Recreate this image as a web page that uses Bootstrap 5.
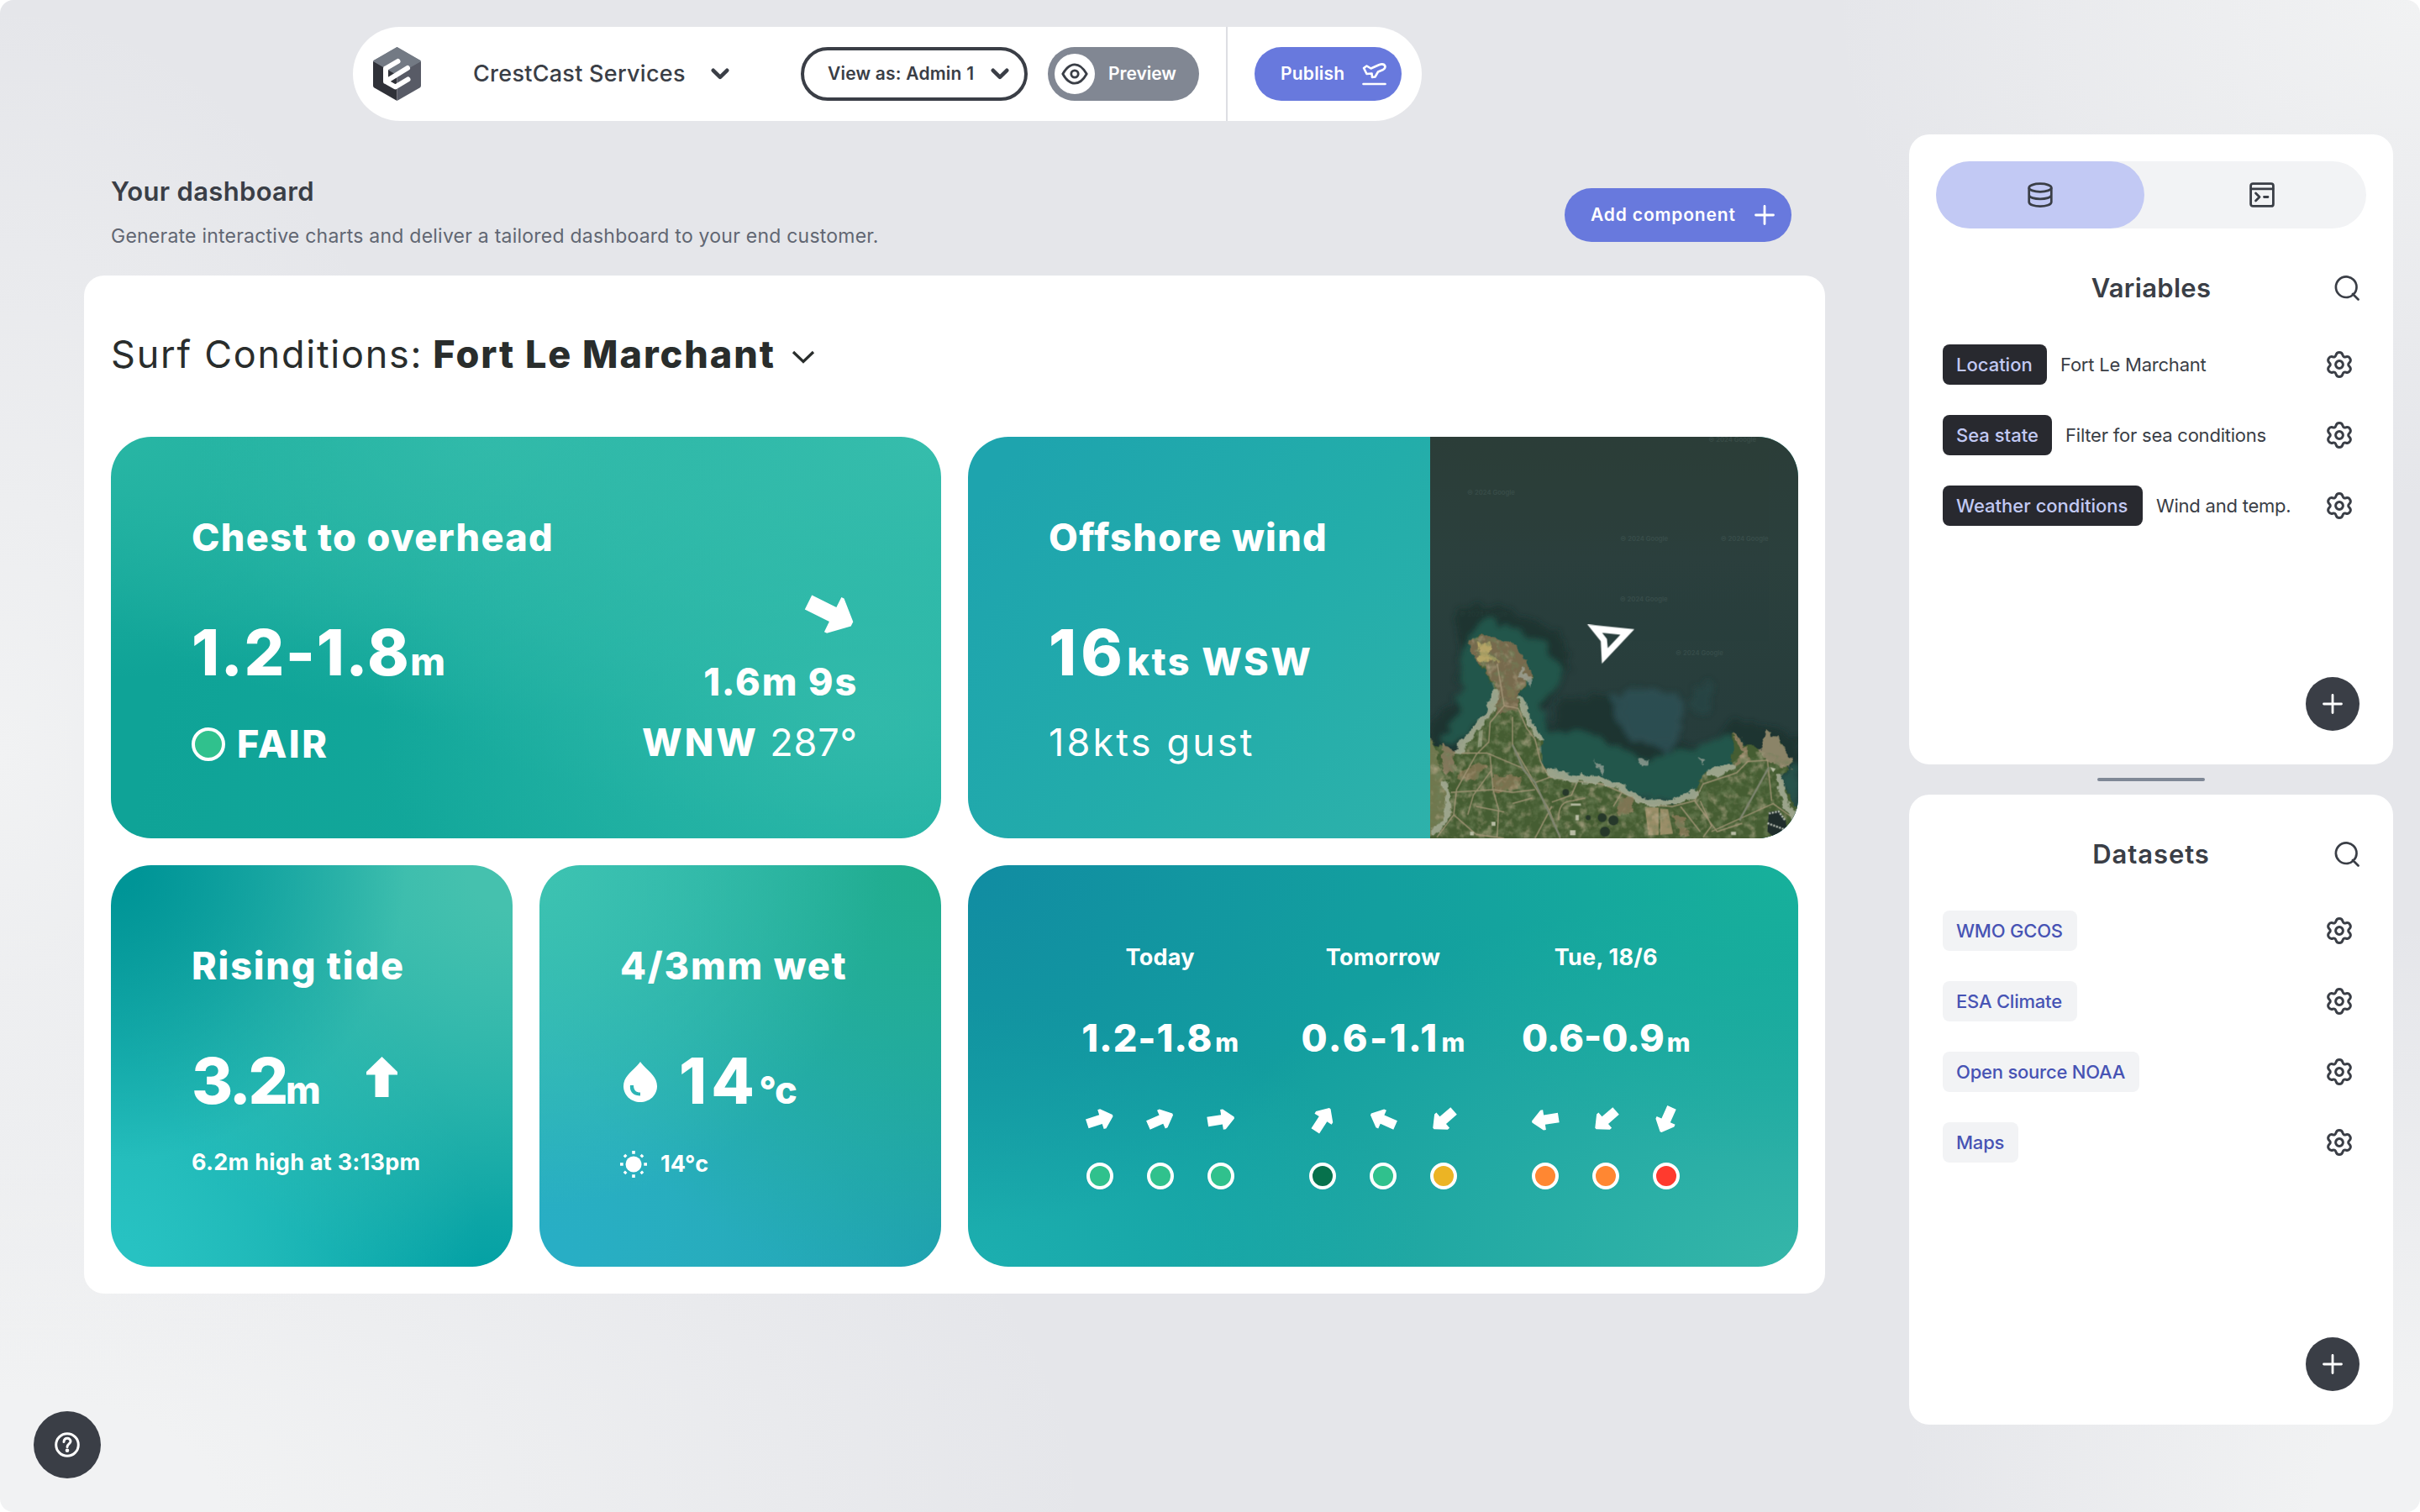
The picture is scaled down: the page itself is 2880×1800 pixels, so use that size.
<!DOCTYPE html>
<html lang="en">
<head>
<meta charset="utf-8">
<title>CrestCast Services</title>
<link rel="stylesheet" href="https://cdn.jsdelivr.net/npm/bootstrap@5.3.0/dist/css/bootstrap.min.css">
<script src="https://cdn.jsdelivr.net/npm/bootstrap@5.3.0/dist/js/bootstrap.bundle.min.js"></script>
<style>
:root{--ink:#3a3e46;--violet:#6879dd}
html{background:#fff}
body{width:2880px;height:1800px;overflow:hidden;position:relative;border-radius:16px;font-family:Inter,"Liberation Sans",sans-serif;color:var(--ink);
background:radial-gradient(ellipse 560px 900px at 0 50%,#f1f2f3 0,#f1f2f300 100%),radial-gradient(ellipse 700px 600px at 100% 0,#f1f2f3 0,#f1f2f300 100%),radial-gradient(ellipse 620px 700px at 100% 100%,#f1f2f3 20%,#f1f2f300 100%),radial-gradient(ellipse 1300px 700px at 0 100%,#f1f2f3 20%,#f1f2f300 100%),#e5e6ea}
svg{display:block;flex:none}
.text-nowrap,.chip,.unit{white-space:nowrap}
.ls1{letter-spacing:.01em}.ls2{letter-spacing:.02em}.ls3{letter-spacing:.03em}.ls4{letter-spacing:.04em}.ls5{letter-spacing:.055em}.ls7{letter-spacing:.07em}.lsn1{letter-spacing:-.01em}.lsn4{letter-spacing:-.045em}
.topbar{margin-left:320px;width:1272px;height:112px;border-radius:56px;padding-left:24px;padding-right:24px}
.pill{height:64px;border-radius:32px;border:0;font-size:21px;font-weight:600;padding:0}
.pill-outline{border:4px solid var(--ink);width:270px;padding-left:28px;padding-right:18px;color:var(--ink)}
.pill-gray{background:#818793;color:#fff;width:180px;padding-left:8px;margin-left:24px}
.pill-violet{background:var(--violet);color:#fff}
.eye{width:48px;height:48px}
.divider{width:2px;background:#dddee3;margin-left:32px;margin-right:32px}
.main-col{width:2172px;padding-left:100px;padding-top:32px}
.intro{height:184px;padding:64px 40px 0 32px}
.t-head{font-size:31px;font-weight:600;line-height:40px;margin:0}
.t-sub{font-size:23px;line-height:32px;color:#616672;margin:17px 0 0}
.board{height:1212px;border-radius:24px;padding:64px 32px 32px}
.board-title{font-size:45px;line-height:60px;height:128px;color:#292d2c;gap:12px;letter-spacing:.039em}
.board-title b{font-weight:800;letter-spacing:.043em}
.tile{height:478px;border-radius:48px;color:#fff;padding:90px 99px 0 96px;font-size:45px;font-weight:800;overflow:hidden}
.tile-w{width:988px}.tile-n{width:478px;padding-right:0}
.tiles{gap:32px}
.tile h2{font-size:45px;font-weight:800;line-height:60px;margin:0 0 62px;white-space:nowrap}
.big{font-size:75px;line-height:90px;white-space:nowrap}
.unit{font-size:45px;line-height:1}
.l60{line-height:60px}.small27{font-size:27px;font-weight:700;line-height:40px;margin-top:32px}
.g1{background:radial-gradient(ellipse 90% 100% at 100% 0,#36bdac 0,#36bdac00 100%),radial-gradient(ellipse 60% 90% at 92% 70%,#2fb8a9 0,#2fb8a900 100%),radial-gradient(ellipse 60% 60% at 0 0,#28b6a4 0,#28b6a400 100%),radial-gradient(ellipse 60% 70% at 45% 0,#30b9a9 0,#30b9a900 100%),linear-gradient(100deg,#0fa397 10%,#17aea0 100%)}
.g2{background:linear-gradient(125deg,#1ea4ae 5%,#23adaa 40%,#31b3ab 75%)}
.g3{background:radial-gradient(circle at 0 0,#009597 5%,#00959700 52%),radial-gradient(circle at 100% 0,#45c1ae 8%,#45c1ae00 75%),radial-gradient(circle at 0 100%,#27c2c2 5%,#27c2c200 65%),radial-gradient(circle at 100% 100%,#009fa4 10%,#009fa400 65%),#1cafab}
.g4{background:radial-gradient(circle at 0 0,#3dc3b1 0,#3dc3b100 60%),radial-gradient(circle at 100% 0,#20ad8d 0,#20ad8d00 75%),radial-gradient(circle at 0 100%,#28aec5 5%,#28aec500 75%),radial-gradient(circle at 100% 100%,#1ea0b1 0,#1ea0b100 80%),#2cb3af}
.g5{background:radial-gradient(ellipse 50% 90% at 0 0,#118da2 5%,#118da200 100%),radial-gradient(ellipse 50% 75% at 100% 0,#17b09b 5%,#17b09b00 100%),radial-gradient(ellipse 55% 65% at 0 100%,#1caeaf 5%,#1caeaf00 100%),radial-gradient(ellipse 75% 95% at 100% 100%,#35b6a9 0,#35b6a900 100%),#139f9f}
.dot{border:4px solid #fff;border-radius:50%;flex:none;width:32px;height:32px;background:#30c18d}
.dot-lg{width:40px;height:40px}
.dk{background:#07714c}.ye{background:#ecb424}.or{background:#ff8732}.re{background:#ff3a2e}
.tile-map{width:438px;height:478px;flex:none}
.fc{width:265.4px}
.fc-l{font-size:27px;font-weight:700;line-height:40px}
.fc-v{font-size:45px;line-height:60px;margin-top:46px;white-space:nowrap;gap:3px}
.fc-v .unit{font-size:30px}
.side{width:576px;margin-left:100px;padding-top:160px}
.side-card{height:750px;border-radius:24px;padding:32px 32px 40px}
.switch{background:#f2f3f5;height:80px;border-radius:40px}
.switch>div{width:248px;border-radius:40px}
.switch .on{background:#c2c9f4}
.side-head{height:48px}
.side-list{gap:36px;padding:0 16px 0 8px}
.chip{height:48px;border-radius:8px;font-size:22px;font-weight:500;padding-left:16px;line-height:48px}
.chip-d{background:#28292f;color:#c2c9f4}
.chip-l{background:#f2f3f5;color:#4753b4}
.desc{font-size:22px;white-space:nowrap;letter-spacing:-.01em}
.fab{width:64px;height:64px;border-radius:50%;background:var(--ink);margin-right:8px}
.grip{height:36px}.grip i{width:128px;height:4px;border-radius:2px;background:#7f8896;margin-top:-1px}
.help{position:absolute;left:40px;top:1680px;width:80px;height:80px;border-radius:50%;background:var(--ink)}
</style>
</head>
<body class="d-flex align-items-start">
<svg width="0" height="0" class="position-absolute">
<symbol id="gear" viewBox="-16 -16 32 32"><g fill="none" stroke="#3a3e46" stroke-width="3" stroke-linejoin="round"><path d="M0-14.5Q3.2-14.5 4-11.4Q4.8-8.3 7.9-9.2Q11-10.2 12.7-7.3Q14.3-4.4 11.9-2.2Q9.5 0 11.9 2.2Q14.3 4.4 12.7 7.3Q11 10.2 7.9 9.2Q4.8 8.3 4 11.4Q3.2 14.5 0 14.5Q-3.2 14.5-4 11.4Q-4.8 8.3-7.9 9.2Q-11 10.2-12.7 7.3Q-14.3 4.4-11.9 2.2Q-9.5 0-11.9-2.2Q-14.3-4.4-12.7-7.3Q-11-10.2-7.9-9.2Q-4.8-8.3-4-11.4Q-3.2-14.5 0-14.5Z"/><circle r="4.4"/></g></symbol>
<symbol id="arr" viewBox="-17 -17 34 34"><path fill="#fff" d="M-16-5.7H1V-12H4L16-1V1L4 12H1V5.7H-16Z"/></symbol>
<symbol id="chev" viewBox="0 0 22 14"><path d="M2.8 2.8 11 10.8 19.2 2.8" fill="none" stroke="#3a3e46" stroke-width="4.6" stroke-linecap="round" stroke-linejoin="round"/></symbol>
<symbol id="plus" viewBox="0 0 24 24"><path d="M12 1.5V22.5M1.5 12H22.5" stroke="#fff" stroke-width="2.8" stroke-linecap="round"/></symbol>
<symbol id="mag" viewBox="0 0 30 30"><path d="M22 22 28.5 28.5M26.5 13.7A12.3 12.3 0 1 1 1.9 13.7 12.3 12.3 0 0 1 26.5 13.7Z" fill="none" stroke="#3a3e46" stroke-width="2.7" stroke-linecap="round"/></symbol>
</svg>

<div class="main-col flex-shrink-0">
  <nav class="topbar bg-white d-flex align-items-center">
    <svg width="57" height="64" viewBox="0 0 57 64"><path d="M28.5 0 57 16.5 28.5 33 0 16.5Z" fill="#737a84"/><path d="M0 18Q0 16.5 1.3 17.2L28.5 32V64L1.5 48.6Q0 47.7 0 46Z" fill="#2f3138"/><path d="M57 18Q57 16.5 55.700 17.200L28.500 32V64L55.500 48.600Q57 47.700 57 46Z" fill="#585b66"/><path d="M28.500 0 56 15.800 57 17 28.500 33.500 0 17 1 15.800Z" fill="#737a84"/><path d="M29.500 17 15 25.500V41L26.500 47.500 41.500 38.500M15 25.500V41L41 25" fill="none" stroke="#fff" stroke-width="6" stroke-linecap="round" stroke-linejoin="round"/></svg>
    <span class="text-nowrap ls1" style="font-size:27px;font-weight:500;margin-left:62px">CrestCast Services</span>
    <svg width="22" height="14" class="ms-auto"><use href="#chev"/></svg>
    <button class="btn pill pill-outline d-flex align-items-center justify-content-between" style="margin-left:85px"><span class="text-nowrap ls1">View as: Admin 1</span><svg width="22" height="14"><use href="#chev"/></svg></button>
    <button class="btn pill pill-gray d-flex align-items-center"><span class="eye bg-white rounded-circle d-flex align-items-center justify-content-center"><svg width="32" height="32" viewBox="0 0 32 32" fill="none" stroke="#3a3e46" stroke-width="2.800"><path d="M1.800 16C6 8.500 10.500 4.800 16 4.800S26 8.500 30.200 16C26 23.500 21.500 27.200 16 27.200S6 23.500 1.800 16Z" stroke-linejoin="round"/><circle cx="16" cy="16" r="4.200"/></svg></span><span style="margin-left:16px">Preview</span></button>
    <div class="divider align-self-stretch"></div>
    <button class="btn pill pill-violet d-flex align-items-center justify-content-between ls1" style="width:175px;padding:0 18px 0 31px"><span>Publish</span><svg width="29" height="27" viewBox="0 0 29 27" fill="none" stroke="#fff" stroke-width="2.600" stroke-linejoin="round" stroke-linecap="round"><path d="M2 6 5.500 3.500 10.500 6.500 20 2.200Q26 0 27.500 4 27.500 6.500 25 8L19 10.500 15.500 16.500 12 17 11.500 12.500 5.500 13Z"/><path d="M1.500 25H27.500"/></svg></button>
  </nav>
  <header class="intro d-flex justify-content-between">
    <div><h1 class="t-head ls1">Your dashboard</h1><p class="t-sub text-nowrap ls1">Generate interactive charts and deliver a tailored dashboard to your end customer.</p></div>
    <button class="btn pill pill-violet d-flex align-items-center justify-content-between" style="width:270px;margin-top:16px;padding:0 20px 0 31px"><span class="ls4 text-nowrap">Add component</span><svg width="24" height="24"><use href="#plus"/></svg></button>
  </header>

  <section class="board bg-white">
    <div class="board-title d-flex text-nowrap"><span>Surf Conditions:</span><b>Fort Le Marchant</b><svg width="28" height="18" viewBox="0 0 28 18" style="margin:24px 0 0 7px"><path d="M2 3 14 14.500 26 3" fill="none" stroke="#292d2c" stroke-width="3.200"/></svg></div>
    <div class="d-flex flex-wrap tiles">
      <article class="tile tile-w g1">
        <h2 class="ls3">Chest to overhead</h2>
        <div class="d-flex justify-content-between">
          <div>
            <div class="d-flex align-items-baseline"><span class="big ls2">1.2-1.8</span><span class="unit">m</span></div>
            <div class="d-flex align-items-center l60 ls5" style="margin-top:34px"><i class="dot dot-lg"></i><span style="margin-left:14px">FAIR</span></div>
          </div>
          <div class="d-flex flex-column align-items-end l60 text-nowrap" style="margin-top:-32px">
            <svg width="66" height="60" viewBox="-33 -30 66 60" style="margin-bottom:21px"><path transform="rotate(26.400)" fill="#fff" d="M-29-9.500H3.500V-23H7L29-3V3L7 23H3.500V9.500H-29Z"/></svg>
            <div class="ls4" style="margin-top:1px">1.6m 9s</div>
            <div class="d-flex" style="margin-top:12px;gap:13px"><span class="ls7">WNW</span><span class="fw-normal ls2">287°</span></div>
          </div>
        </div>
      </article>
      <article class="tile tile-w g2 d-flex justify-content-between" style="padding-top:0;padding-right:0">
        <div style="padding-top:90px">
          <h2 class="ls3">Offshore wind</h2>
          <div class="d-flex align-items-baseline"><span class="big ls7">16</span><span class="unit ls5">kts WSW</span></div>
          <div class="l60 fw-normal ls7 text-nowrap" style="margin-top:32px">18kts gust</div>
        </div>
        <svg class="tile-map" viewBox="36 30 1314 1434" preserveAspectRatio="none">
          <defs>
            <filter id="rough" x="-5%" y="-5%" width="110%" height="110%"><feTurbulence type="fractalNoise" baseFrequency=".03" numOctaves="4" seed="4"/><feDisplacementMap in="SourceGraphic" scale="34" xChannelSelector="R" yChannelSelector="G"/></filter>
            <filter id="soft" x="-20%" y="-20%" width="140%" height="140%"><feTurbulence type="fractalNoise" baseFrequency=".02" numOctaves="4" seed="9"/><feDisplacementMap in="SourceGraphic" scale="60" xChannelSelector="R" yChannelSelector="G"/><feGaussianBlur stdDeviation="9"/></filter>
            <filter id="grain"><feTurbulence type="fractalNoise" baseFrequency=".035" numOctaves="5" seed="2"/><feColorMatrix values="0 0 0 0 .16  0 0 0 0 .22  0 0 0 0 .1  0 2.600 0 0 -1.150"/></filter>
            <filter id="grain2"><feTurbulence type="fractalNoise" baseFrequency=".03" numOctaves="4" seed="12"/><feColorMatrix values="0 0 0 0 .58  0 0 0 0 .47  0 0 0 0 .33  2.600 0 0 0 -1.350"/></filter>
            <linearGradient id="sea" x1="0" y1="0" x2="0" y2="1"><stop offset="0" stop-color="#2b3d38"/><stop offset=".3" stop-color="#2b403d"/><stop offset="1" stop-color="#243b3b"/></linearGradient>
            <clipPath id="landclip"><path d="M36 1110 120 1155 180 1090 240 1030 275 960 240 870 180 800 185 750 230 740 300 760 370 830 400 890 350 950 380 1030 430 1110 440 1210 520 1250 640 1265 720 1290 800 1335 900 1350 980 1310 1010 1235 1110 1200 1160 1150 1260 1160 1330 1190 1285 1250 1350 1400V1464H36Z"/></clipPath>
          </defs>
          <path d="M36 30H1350V1464H36Z" fill="url(#sea)"/>
          <g fill="#7f9690" opacity=".16" font-family="Inter,sans-serif" font-size="23" font-weight="600"><text x="168" y="237">© 2024 Google</text><text x="715" y="401">© 2024 Google</text><text x="1073" y="401">© 2024 Google</text><text x="713" y="618">© 2024 Google</text><text x="912" y="810">© 2024 Google</text><text x="1030" y="47">© 2024 Google</text><text x="142" y="673">© 2024 Google</text><text x="550" y="1137">© 2024 Google</text></g>
          <g filter="url(#soft)">
            <path d="M130 640 320 640 500 740 540 860 440 1010 470 1080 500 960 700 960 760 1120 1050 1130 1120 1040 1350 1100V1300H36V1050L140 960Z" fill="#1c302f" opacity=".75"/>
            <path d="M150 780 240 670 330 720 440 770 520 870 440 980 450 1080 560 1080 660 1110 780 1180 940 1150 1110 1090 1160 1200 960 1350 460 1270 330 900 260 1000 120 1140 60 1120 140 1020Z" fill="#23564c"/>
            <path d="M690 960 800 920 930 950 935 1090 880 1165 820 1120 740 1110 700 1050Z" fill="#2b5053" opacity=".9"/>
            <path d="M970 920 1040 910 1030 1020 960 1010Z" fill="#284948" opacity=".6"/>
            <path d="M1280 1240 1350 1200V1400Z" fill="#28524c"/>
          </g>
          <g filter="url(#rough)">
            <path d="M20 1110 120 1165 180 1090 240 1030 275 960 240 870 180 800 185 750 230 740 300 760 370 830 400 890 350 950 380 1030 430 1110 440 1210 520 1250 640 1265 720 1290 800 1335 900 1350 980 1310 1010 1235 1110 1200 1120 1090 1160 1130 1230 1150 1240 1080 1290 1120 1330 1190 1285 1250 1370 1410V1490H20Z" fill="#455d30"/>
            <path d="M175 760 240 735 340 770 400 880 350 950 350 1010 270 1020 280 940 230 850 180 810Z" fill="#776b4e"/>
            <path d="M210 760 250 770 245 810 290 830 230 835 200 815Z" fill="#b5a466"/>
            <path d="M40 1110 60 1160 75 1240 110 1290 110 1380 20 1470V1110Z" fill="#6f7850"/>
            <path d="M75 1130 125 1150 120 1230 80 1230Z" fill="#83785c"/>
            <path d="M1120 1090 1150 1110 1180 1180 1110 1220 1150 1160Z" fill="#8b7c5d"/><path d="M1240 1080 1280 1110 1330 1180 1320 1215 1240 1190 1210 1150Z" fill="#8b8468"/>
            <path d="M310 930 340 930 335 965 305 960ZM260 1235 370 1240 350 1290 260 1300ZM140 1220 220 1190 240 1210 190 1260 135 1260Z" fill="#7b7250"/>
            <path d="M710 1315 765 1320 755 1380 705 1375ZM900 1380 940 1390 960 1450 930 1460Z" fill="#7e7552"/>
          </g>
          <path d="M802 1352 852 1354V1452H815ZM857 1358 885 1360 903 1448 857 1452Z" fill="#9a8e68"/>
          <g clip-path="url(#landclip)"><path d="M36 700H1350V1464H36Z" filter="url(#grain)" opacity=".75"/><path d="M36 700H1350V1464H36Z" filter="url(#grain2)" opacity=".6"/></g>
          <g fill="none" stroke="#a7987a" stroke-width="4.500" opacity=".85" stroke-linejoin="round">
            <path d="M275 840 290 930 300 990 250 1050 245 1120 200 1165 130 1290 120 1380 60 1460M300 990 350 1000 380 1070 410 1110 430 1190 460 1245 560 1260 650 1270 720 1300 820 1345 900 1350 980 1330 1010 1270 1130 1230 1170 1190 1240 1185 1255 1330M120 1160 240 1160 370 1215 410 1280 460 1360 500 1464M330 1030 330 1130 400 1250M250 1170 260 1290 110 1300M260 1290 280 1360 275 1460M260 1290 330 1300 410 1290M410 1265 480 1240M255 1220 190 1310 170 1380M720 1300 690 1350M470 1335 540 1310 560 1265M470 1350 410 1464M495 1400Q490 1330 545 1330L590 1320M1000 1330 1040 1420 1010 1460M980 1330 1060 1440 1150 1410M1040 1440 1260 1340 1330 1390M930 1350 1000 1440M300 1370 200 1350M120 1380 200 1450 300 1464M330 1340 400 1320"/>
          </g>
          <path d="M1245 1210 1140 1400M330 1130 370 1220 410 1265 500 1460" fill="none" stroke="#7f8570" stroke-width="7"/>
          <g fill="none" stroke="#9fa78f" stroke-linecap="round" filter="url(#rough)" opacity=".95">
            <path d="M270 940Q275 990 225 1040L135 1150" stroke-width="26"/><path d="M360 965Q375 1030 425 1100" stroke-width="20"/><path d="M465 1225Q520 1255 640 1255L710 1280Q780 1335 860 1340 930 1335 985 1300" stroke-width="26"/><path d="M1040 1230 1110 1210" stroke-width="28"/><path d="M1285 1245Q1285 1320 1345 1400" stroke-width="24"/><path d="M90 1270Q125 1380 50 1440" stroke-width="20"/>
          </g>
          <g fill="#b9bda5"><path d="M210 1080 224 1076 220 1135 205 1140Z" opacity=".5"/><path d="M555 1380h12v20h-12zM538 1340h36v7h-36zM535 1435h20v18h-20zM178 1440h14v14h-14zM1110 1440h18v12h-18zM255 1405h14v14h-14z"/><path d="M1250 1210 1270 1215 1260 1228Z"/></g>
          <g fill="#a4aaa0" filter="url(#rough)"><path d="M620 1190 650 1205 660 1240 630 1210ZM780 1170 812 1190 790 1215ZM985 1180 1020 1185 1010 1200ZM355 850 405 905 395 920 360 880Z" opacity=".7"/></g>
          <g fill="#26382a"><circle cx="520" cy="1300" r="12"/><circle cx="650" cy="1390" r="16"/><circle cx="690" cy="1400" r="18"/><circle cx="600" cy="1390" r="9"/><circle cx="660" cy="1440" r="18"/><path d="M1245 1370 1280 1365 1305 1400 1310 1440 1270 1464 1240 1440Z" fill="#1f2d2b"/></g>
          <path d="M1245 1375 1280 1368 1303 1400M1240 1410 1300 1432" stroke="#b8bfb4" stroke-width="7" stroke-dasharray="7 4" fill="none"/>
          <path fill="#fff" fill-rule="evenodd" d="M597 700 765 717 649 840 645 760ZM650 730 667 752 670 785 715 737Z"/>
        </svg>
      </article>
      <article class="tile tile-n g3">
        <h2 class="ls4">Rising tide</h2>
        <div class="d-flex align-items-baseline"><span class="big lsn4">3.2</span><span class="unit">m</span><svg width="37" height="48" viewBox="0 0 37 48" class="align-self-start" style="margin:16px 0 0 54px"><path fill="#fff" d="M18.500 0 37 18V21.500H26.500V48H10.500V21.500H0V18Z"/></svg></div>
        <div class="small27 ls1 text-nowrap">6.2m high at 3:13pm</div>
      </article>
      <article class="tile tile-n g4">
        <h2 class="ls4">4/3mm wet</h2>
        <div class="d-flex align-items-baseline"><svg width="40" height="48" viewBox="0 0 40 48" class="align-self-start" style="margin:22px 26px 0 4px"><path fill="#fff" fill-rule="evenodd" d="M20 0C26 9 40 16 40 29 40 40 31 48 20 48S0 40 0 29C0 16 14 9 20 0ZM8 28C7 36 12 40.500 20 40.500V36.500C15 36.500 12 34 12 28Z"/></svg><span class="big ls7">14</span><span class="unit lsn4">°c</span></div>
        <div class="small27 d-flex align-items-center" style="margin-top:34px"><svg width="32" height="32" viewBox="-16 -16 32 32"><circle r="9.500" fill="#fff"/><path d="M0-16V-12.300M0 16V12.300M-16 0H-12.300M16 0H12.300M-11-11-8.800-8.800M11-11 8.800-8.800M-11 11-8.800 8.800M11 11 8.800 8.800" stroke="#fff" stroke-width="3.600"/></svg><span style="margin-left:16px">14°c</span></div>
      </article>
      <article class="tile tile-w g5 d-flex" style="padding-right:96px" id="forecast"></article>
    </div>
  </section>
</div>

<aside class="side flex-shrink-0">
  <section class="side-card bg-white d-flex flex-column">
    <div class="switch d-flex justify-content-between flex-shrink-0">
      <div class="on d-flex align-items-center justify-content-center"><svg width="30" height="30" viewBox="0 0 30 30" fill="none" stroke="#3a3e46" stroke-width="2.700"><ellipse cx="15" cy="6.500" rx="13.300" ry="4.800"/><path d="M1.700 6.500V23.500C1.700 30.300 28.300 30.300 28.300 23.500V6.500M1.700 15C1.700 21.500 28.300 21.500 28.300 15"/></svg></div>
      <div class="d-flex align-items-center justify-content-center"><svg width="30" height="30" viewBox="0 0 30 30" fill="none" stroke="#3a3e46" stroke-width="2.800" stroke-linecap="round" stroke-linejoin="round"><rect x="1.600" y="1.600" width="26.800" height="26.800" rx="2.500"/><path d="M2 7.800H28M7.500 13 12 17.500 7.500 22M17.500 17.500H22"/></svg></div>
    </div>
    <div class="side-head position-relative d-flex align-items-center justify-content-center flex-shrink-0" style="margin:47px 0 43px"><h2 class="t-head ls1">Variables</h2><svg width="30" height="30" class="position-absolute end-0 me-2"><use href="#mag"/></svg></div>
    <div class="side-list d-flex flex-column" id="vars"></div>
    <div class="fab mt-auto ms-auto d-flex align-items-center justify-content-center"><svg width="24" height="24"><use href="#plus"/></svg></div>
  </section>
  <div class="grip d-flex align-items-center justify-content-center"><i></i></div>
  <section class="side-card bg-white d-flex flex-column">
    <div class="side-head position-relative d-flex align-items-center justify-content-center flex-shrink-0" style="margin:15px 0 43px"><h2 class="t-head ls3">Datasets</h2><svg width="30" height="30" class="position-absolute end-0 me-2"><use href="#mag"/></svg></div>
    <div class="side-list d-flex flex-column" id="sets"></div>
    <div class="fab mt-auto ms-auto d-flex align-items-center justify-content-center"><svg width="24" height="24"><use href="#plus"/></svg></div>
  </section>
</aside>

<div class="help d-flex align-items-center justify-content-center"><svg width="30" height="30" viewBox="0 0 30 30" fill="none" stroke="#fff" stroke-width="3"><circle cx="15" cy="15" r="13.300"/><path d="M11 11.500C11.300 5.800 19.200 6.300 19 11 18.800 14 15 13.800 15 17.500" stroke-linecap="round"/><circle cx="15" cy="21.800" r="2.300" fill="#fff" stroke="none"/></svg></div>

<script>
const gear = '<svg width="32" height="32" class="ms-auto"><use href="#gear"/></svg>';
const vars = [['Location', 124, 'Fort Le Marchant'], ['Sea state', 130, 'Filter for sea conditions'], ['Weather conditions', 238, 'Wind and temp.']];
document.getElementById('vars').innerHTML = vars.map(([n, w, d]) =>
  `<div class="d-flex align-items-center"><span class="chip chip-d" style="width:${w}px">${n}</span><span class="desc ms-3">${d}</span>${gear}</div>`).join('');
const sets = [['WMO GCOS', 160], ['ESA Climate', 160], ['Open source NOAA', 234], ['Maps', 90]];
document.getElementById('sets').innerHTML = sets.map(([n, w]) =>
  `<div class="d-flex align-items-center"><span class="chip chip-l lsn1" style="width:${w}px">${n}</span>${gear}</div>`).join('');
const days = [
  ['Today', '1.2-1.8', 'ls2', [-18, -24, -9], ['', '', '']],
  ['Tomorrow', '0.6-1.1', 'ls5', [-57, 204, 139], ['dk', '', 'ye']],
  ['Tue, 18/6', '0.6-0.9', '', [171, 139, 114], ['or', 'or', 're']]];
document.getElementById('forecast').innerHTML = days.map(([d, v, ls, a, c]) =>
  `<div class="fc"><div class="fc-l text-center ls1">${d}</div>
   <div class="fc-v d-flex justify-content-center align-items-baseline"><span class="${ls}">${v}</span><span class="unit">m</span></div>
   <div class="d-flex justify-content-center" style="gap:38px;margin-top:50px">${a.map(r => `<svg width="34" height="34" style="transform:rotate(${r}deg)"><use href="#arr"/></svg>`).join('')}</div>
   <div class="d-flex justify-content-center" style="gap:40px;margin-top:34px">${c.map(k => `<i class="dot ${k}"></i>`).join('')}</div></div>`).join('');
</script>
</body>
</html>
